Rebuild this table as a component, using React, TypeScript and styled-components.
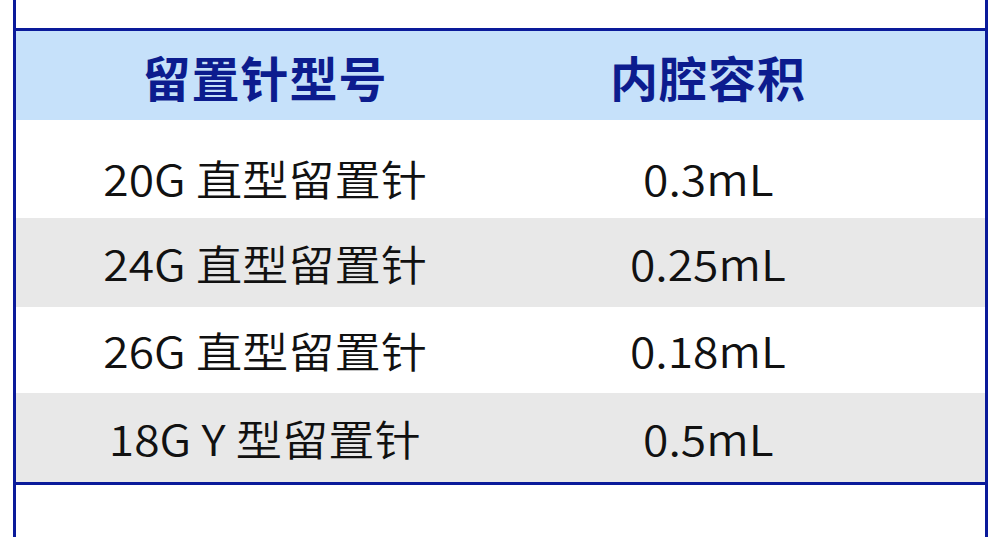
import styled, { createGlobalStyle } from 'styled-components';

const GlobalStyle = createGlobalStyle`
  html, body {
    margin: 0;
    padding: 0;
    background: #ffffff;
    font-family: "Noto Sans CJK SC", "Noto Sans", sans-serif;
  }
`;

const NAVY = '#0a1a9a';

/**
 * 外框：左右两条竖线贯穿整页
 */
const Frame = styled.div`
  box-sizing: border-box;
  margin-left: 13px;
  width: 975px;
  height: 537px;
  border-left: 3px solid ${NAVY};
  border-right: 3px solid ${NAVY};
  padding-top: 28px;
  overflow: hidden;
`;

const Table = styled.div`
  border-top: 3px solid ${NAVY};
  border-bottom: 3px solid ${NAVY};
`;

const Row = styled.div<{ $bg: string; $h: number; $top?: number }>`
  display: grid;
  grid-template-columns: 498px 388px 1fr;
  align-items: center;
  box-sizing: border-box;
  height: ${p => p.$h}px;
  padding-top: ${p => p.$top ?? 0}px;
  background: ${p => p.$bg};
`;

const HeadCell = styled.div`
  text-align: center;
  font-size: 48px;
  font-weight: 700;
  color: #0c1c8e;
  line-height: 1;
  letter-spacing: 1px;
`;

const Cell = styled.div`
  text-align: center;
  font-size: 42px;
  font-weight: 350;
  color: #111111;
  line-height: 1;
`;

// 原图文字横向略微拉伸
const Stretch = styled.span`
  display: inline-block;
  transform: scaleX(1.1);
`;

const rows = [
  { model: '20G 直型留置针', volume: '0.3mL', bg: '#ffffff', h: 98, top: 17 },
  { model: '24G 直型留置针', volume: '0.25mL', bg: '#e8e8e8', h: 89 },
  { model: '26G 直型留置针', volume: '0.18mL', bg: '#ffffff', h: 86 },
  { model: '18G Y 型留置针', volume: '0.5mL', bg: '#e8e8e8', h: 89 },
];

export default function App() {
  return (
    <>
      <GlobalStyle />
      <Frame>
        <Table>
          <Row $bg="#c6e1fa" $h={89} $top={0}>
            <HeadCell>留置针型号</HeadCell>
            <HeadCell>内腔容积</HeadCell>
          </Row>
          {rows.map(r => (
            <Row key={r.model} $bg={r.bg} $h={r.h} $top={r.top}>
              <Cell><Stretch>{r.model}</Stretch></Cell>
              <Cell><Stretch>{r.volume}</Stretch></Cell>
            </Row>
          ))}
        </Table>
      </Frame>
    </>
  );
}
